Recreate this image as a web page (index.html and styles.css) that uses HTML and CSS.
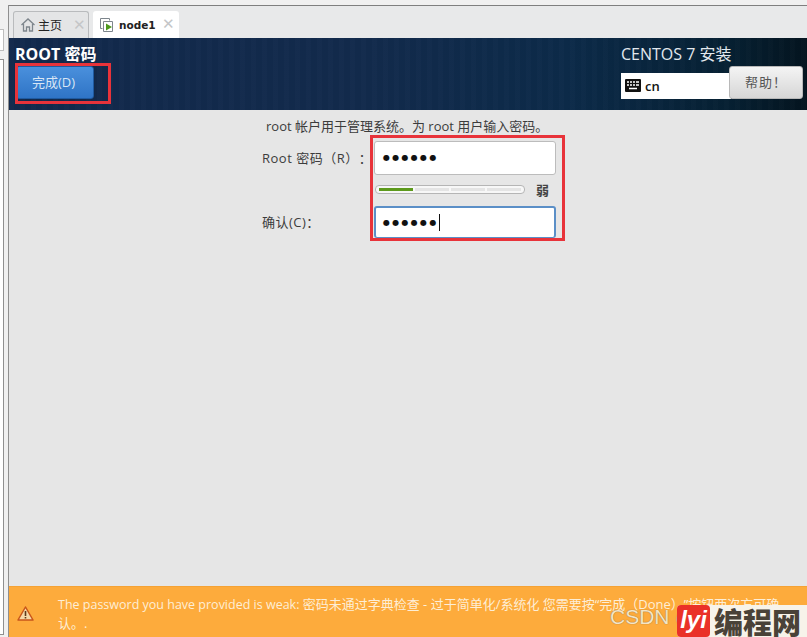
FILE: index.html
```html
<!DOCTYPE html>
<html lang="zh">
<head>
<meta charset="utf-8">
<title>ROOT 密码</title>
<link rel="stylesheet" href="styles.css">
</head>
<body>
<div class="app">
  <aside class="side">
    <div class="side-box-a"></div>
    <div class="side-box-b"></div>
  </aside>
  <div class="main">
    <nav class="tabs">
      <div class="tab tab-home">
        <svg class="tab-icon" width="16" height="16" viewBox="0 0 16 16"><path d="M1.500 8 8 2l6.500 6M3.500 7v7h3v-4h3v4h3V7" fill="none" stroke="#7d858c" stroke-width="1.300"/></svg>
        <span class="tab-label">主页</span>
        <span class="tab-x">✕</span>
      </div>
      <div class="tab tab-active">
        <svg class="tab-icon" width="16" height="16" viewBox="0 0 16 16"><path d="M1.500 1.500h9v2M1.500 1.500v10h2" fill="none" stroke="#7d858c"/><path d="M4.500 4.500h9v10h-9z" fill="#fff" stroke="#7d858c"/><path d="M7 6.500v7l6-3.500z" fill="#4f9a1e"/></svg>
        <span class="tab-label tab-label-bold">node1</span>
        <span class="tab-x">✕</span>
      </div>
    </nav>
    <header class="head">
      <div class="head-left">
        <h1 class="title">ROOT 密码</h1>
        <button class="done">完成(D)</button>
      </div>
      <div class="head-right">
        <div class="product">CENTOS 7 安装</div>
        <div class="head-tools">
          <div class="kbd">
            <svg width="16" height="13" viewBox="0 0 16 13"><rect width="16" height="13" rx="1" fill="#111"/><path d="M2 3h2M5 3h2M8 3h2M11 3h3M2 6h2M5 6h2M8 6h2M11 6h3M4 9.500h8" stroke="#fff" stroke-width="1.300"/></svg>
            <span>cn</span>
          </div>
          <button class="help">帮助！</button>
        </div>
      </div>
    </header>
    <main class="content">
      <p class="intro">root 帐户用于管理系统。为 root 用户输入密码。</p>
      <div class="form">
        <label class="lbl lbl-root">Root 密码（R）：</label>
        <div class="field"><span class="dots">●●●●●●</span></div>
        <div class="strength-row">
          <div class="meter"><i class="seg seg-on"></i><i class="seg"></i><i class="seg"></i><i class="seg"></i></div>
          <span class="weak">弱</span>
        </div>
        <label class="lbl lbl-confirm">确认(C)：</label>
        <div class="field field-focus"><span class="dots">●●●●●●</span><i class="caret"></i></div>
      </div>
    </main>
    <footer class="warn">
      <svg class="warn-icon" width="17" height="15" viewBox="0 0 17 15"><path d="M8.500 1 16 14H1z" fill="#f6d9a8" stroke="#c8561a" stroke-width="1.500" stroke-linejoin="round"/><path d="M8.500 5v5M8.500 11v1.500" stroke="#5a3a1c" stroke-width="1.600"/></svg>
      <p class="warn-text">The password you have provided is weak: <span class="warn-cjk">密码未通过字典检查 - 过于简单化/系统化 您需要按“完成（Done）”按钮两次方可确认。.</span></p>
    </footer>
  </div>
</div>
<div class="mark mark-done"></div>
<div class="mark mark-fields"></div>
<div class="wm">
  <span class="wm-csdn">CSDN @</span>
  <div class="wm-logo">
    <span class="wm-badge">lyi</span>
    <span class="wm-name">编程网</span>
  </div>
</div>
</body>
</html>
```
FILE: styles.css
```css
* { box-sizing: border-box; }
html, body { margin: 0; height: 100%; }
body {
  width: 807px;
  height: 637px;
  overflow: hidden;
  position: relative;
  background: #f0f0f0;
  font-family: "Open Sans", "Noto Sans CJK SC", sans-serif;
  color: #3c3c3c;
  text-spacing-trim: space-all;
}
.app { display: flex; height: 637px; }
.side {
  width: 9px;
  flex: none;
  background: #f0f0f0;
  border-right: 1px solid #8f8f8f;
  margin-top: 5px;
  display: flex;
  flex-direction: column;
  padding-top: 24px;
  position: relative;
}
.side-box-a {
  width: 4px;
  height: 22px;
  background: #fff;
  border: 1px solid #bdbdbd;
  border-left: 0;
}
.side-box-b {
  width: 4px;
  flex: 1;
  margin-top: 8px;
  margin-bottom: 2px;
  background: #fff;
  border: 1px solid #8f8f8f;
  border-left: 0;
}
.main { flex: 1; display: flex; flex-direction: column; min-width: 0; }
.tabs {
  height: 33px;
  margin-top: 5px;
  border-top: 1px solid #7f7f7f;
  background: #e8e9ea;
  display: flex;
  align-items: flex-end;
  padding-left: 4px;
  gap: 4px;
  flex: none;
}
.tab {
  height: 27px;
  display: flex;
  align-items: center;
  border-radius: 3px 3px 0 0;
  font-size: 12px;
  color: #222;
}
.tab-home {
  width: 76px;
  padding-left: 6px;
  background: #e4e5e6;
  border: 1px solid #b9bbbd;
  border-bottom: 0;
}
.tab-active {
  width: 86px;
  padding-left: 6px;
  background: #fff;
}
.tab-icon { flex: none; }
.tab-label { margin-left: 2px; width: 35px; }
.tab-label-bold { font-weight: 700; font-family: "DejaVu Sans", sans-serif; font-size: 10.500px; margin-left: 4px; width: 43px; }
.tab-x { color: #c4c6c8; font-size: 15px; line-height: 1; font-family: "DejaVu Sans", sans-serif; }
.head {
  height: 72px;
  flex: none;
  display: flex;
  justify-content: space-between;
  color: #fff;
  background:
    repeating-linear-gradient(90deg, rgba(255,255,255,0.012) 0 5px, rgba(0,0,0,0.012) 5px 11px),
    linear-gradient(90deg, #12294c 0%, #122a4c 45%, #0c2a49 70%, #062033 90%, #04141f 100%);
}
.head-left { padding: 6px 0 0 6px; }
.title {
  margin: 0;
  font-size: 16px;
  line-height: 21px;
  font-weight: 700;
}
.done {
  display: block;
  width: 78px;
  height: 33px;
  margin: 1px 0 0 1px;
  border: 1px solid #1f5aa0;
  border-radius: 3px;
  background: linear-gradient(180deg, #4a90dc, #2f74c6);
  color: #d8e6f5;
  font: 13px "Open Sans", "Noto Sans CJK SC", sans-serif;
  padding: 0 3px 3px 0;
}
.head-right { width: 186px; padding-top: 6px; }
.product {
  font-size: 16px;
  line-height: 21px;
  color: #e2e8ee;
}
.head-tools { display: flex; margin-top: 6px; position: relative; height: 33px; }
.kbd {
  width: 110px;
  height: 26px;
  margin-top: 2px;
  background: #fff;
  color: #111;
  display: flex;
  align-items: center;
  gap: 4px;
  padding: 0 0 1px 4px;
  font-size: 13px;
  font-weight: 600;
}
.help {
  position: absolute;
  left: 108px;
  top: -5px;
  width: 74px;
  height: 33px;
  padding: 0 0 3px 0;
  border: 1px solid #b8b8b8;
  border-radius: 3px;
  background: linear-gradient(180deg, #f4f4f4, #d6d6d6);
  color: #555;
  font: 13px "Open Sans", "Noto Sans CJK SC", sans-serif;
  letter-spacing: 1px;
}
.content { flex: 1; background: #e6e6e6; position: relative; min-height: 0; }
.intro {
  margin: 0;
  padding-left: 257px;
  font-size: 13px;
  line-height: 18px;
  padding-top: 7px;
  color: #3c3c3c;
}
.form {
  display: grid;
  grid-template-columns: 365px 182px;
  grid-template-rows: 34px 31px 32px;
  margin-top: 6px;
}
.lbl { font-size: 13px; padding: 0 0 2px 253px; align-self: center; color: #3c3c3c; letter-spacing: 0.500px; }
.field {
  background: #fff;
  border: 1px solid #bcbcbc;
  border-radius: 3px;
  display: flex;
  align-items: center;
  padding-left: 8px;
  color: #111;
}
.field-focus { border: 2px solid #5b8fc7; border-bottom-width: 1px; padding-left: 7px; }
.dots { font-family: "DejaVu Sans", sans-serif; font-size: 8px; letter-spacing: 2.300px; line-height: 1; }
.caret { display: block; width: 1px; height: 17px; background: #111; }
.strength-row { grid-column: 2; display: flex; align-items: center; height: 31px; padding-bottom: 3px; }
.lbl-root { grid-row: 1; grid-column: 1; }
.lbl-confirm { grid-row: 3; grid-column: 1; }
.meter {
  width: 150px;
  height: 9px;
  margin-left: 1px;
  background: #f7f7f7;
  border: 1px solid #b5b5b5;
  border-radius: 4px;
  display: flex;
  gap: 2px;
  padding: 2px 3px;
}
.seg { flex: 1; background: #e4e4e4; }
.seg-on { background: #5d9a1c; }
.weak { margin-left: 11px; font-size: 13px; font-weight: 700; color: #444; }
.warn {
  height: 51px;
  flex: none;
  background: #fdab3c;
  display: flex;
  align-items: flex-start;
  padding: 8px 0 0 8px;
  border-top: 1px solid #f5a234;
}
.warn-icon { flex: none; margin-top: 11px; }
.warn-text {
  margin: 0 0 0 24px;
  width: 728px;
  font-size: 12.500px;
  line-height: 18px;
  color: #fdeed6;
}
.warn-cjk { font-size: 13px; }
.mark { position: absolute; border: 3px solid #e8333a; pointer-events: none; }
.mark-done { left: 15px; top: 63px; width: 96px; height: 41px; }
.mark-fields { left: 370px; top: 135px; width: 195px; height: 106px; }
.wm { position: absolute; left: 610px; top: 604px; width: 197px; height: 33px; display: flex; }
.wm-csdn {
  position: absolute;
  left: 0;
  top: 0;
  font: 21px/26px "Liberation Sans", sans-serif;
  color: #f6e4c4;
  text-shadow: 0 0 1px #6b5a3a;
  white-space: nowrap;
}
.wm-logo {
  position: absolute;
  left: 67px;
  top: 1px;
  width: 130px;
  height: 32px;
  background: #f7f3ea;
  display: flex;
  align-items: center;
  border-radius: 4px 0 0 4px;
}
.wm-badge {
  width: 33px;
  height: 32px;
  flex: none;
  border-radius: 4px;
  background: #ea3128;
  color: #fff;
  font: italic 700 24px/30px "Liberation Sans", sans-serif;
  text-align: center;
}
.wm-name {
  margin-left: 4px;
  font: 900 29px/30px "Noto Sans CJK SC", sans-serif;
  color: #4a4238;
  white-space: nowrap;
}
```
